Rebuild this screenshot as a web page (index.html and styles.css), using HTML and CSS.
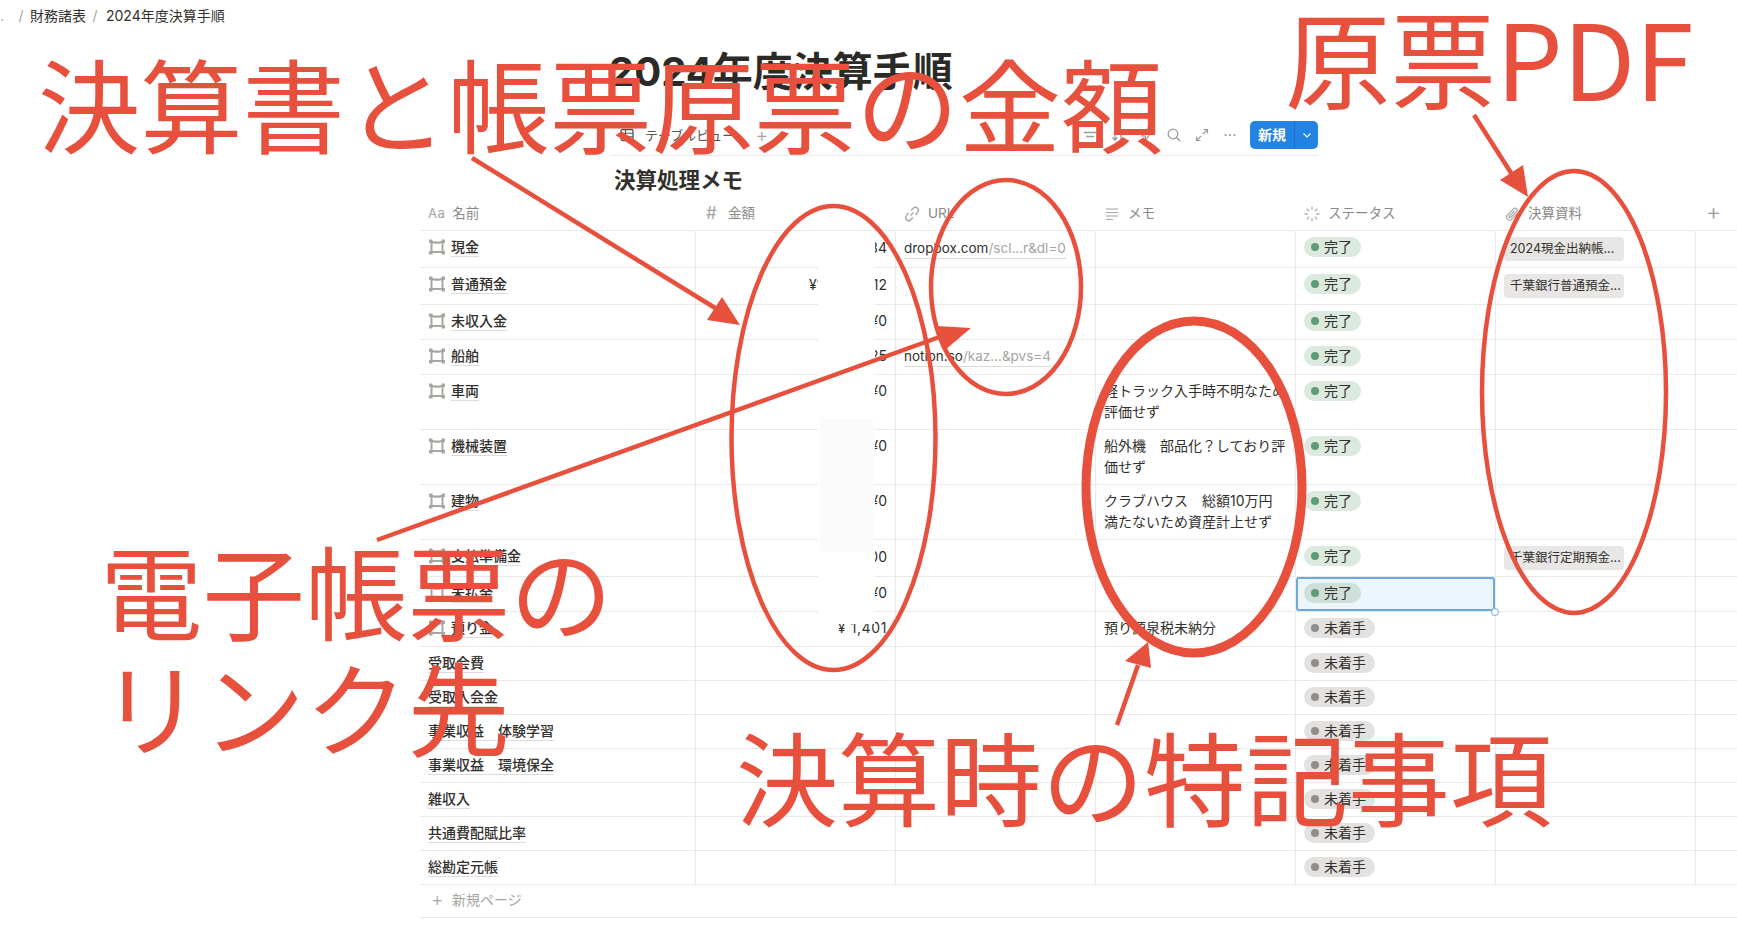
FILE: index.html
```html
<!DOCTYPE html>
<html lang="ja">
<head>
<meta charset="utf-8">
<title>2024年度決算手順</title>
<link rel="stylesheet" href="styles.css">
</head>
<body>
<svg width="0" height="0" class="defs">
  <defs><path id="pgshape" fill="#a8a6a1" fill-rule="evenodd" d="M0 .5H3.500V2Q8 3 12.500 2V.5H16V4H14.500V12H16V15.500H12.500V14H3.500V15.500H0V12H1.500V4H0ZM3.500 4.300V12H12.500V4.300Q8 5.300 3.500 4.300Z"/></defs>
</svg>
<nav class="crumbs">
  <span class="dot">.</span><span class="sep first">/</span><span>財務諸表</span><span class="sep">/</span><span>2024年度決算手順</span>
</nav>
<section class="head">
  <h1 class="title">2024年度決算手順</h1>
  <div class="toolbar">
    <div class="tab">
      <svg class="ic" viewBox="0 0 16 16"><rect x="2" y="2.500" width="12" height="11" rx="1.500" fill="none" stroke="#55534e" stroke-width="1.300"/><path d="M2 6.200H14M2 9.800H14M6.500 2.500V13.500" stroke="#55534e" stroke-width="1.100"/></svg>
      <span class="tab-label">テーブルビュー</span>
      <span class="tab-plus">+</span>
    </div>
    <div class="tools">
      <svg class="ic" viewBox="0 0 16 16"><path d="M2 5.500H14M4 9.500H12" stroke="#9b9a97" stroke-width="1.300" fill="none"/></svg>
      <svg class="ic" viewBox="0 0 16 16"><path d="M5 2.500V13M2.500 10.500 5 13l2.500-2.500M11 13V3M8.500 5.500 11 3l2.500 2.500" stroke="#9b9a97" stroke-width="1.300" fill="none"/></svg>
      <svg class="ic" viewBox="0 0 16 16"><path d="M9 2 4 9h3.500L7 14l5-7H8.500z" stroke="#9b9a97" stroke-width="1.200" fill="none"/></svg>
      <svg class="ic" viewBox="0 0 16 16"><circle cx="7" cy="7" r="4.800" stroke="#9b9a97" stroke-width="1.300" fill="none"/><path d="M10.500 10.500 14 14" stroke="#9b9a97" stroke-width="1.400"/></svg>
      <svg class="ic" viewBox="0 0 16 16"><path d="M9.500 2.500H13.500V6.500M13.500 2.500 9 7M6.500 13.500H2.500V9.500M2.500 13.500 7 9" stroke="#9b9a97" stroke-width="1.200" fill="none"/></svg>
      <svg class="ic" viewBox="0 0 16 16"><circle cx="3.500" cy="8" r="1.100" fill="#9b9a97"/><circle cx="8" cy="8" r="1.100" fill="#9b9a97"/><circle cx="12.500" cy="8" r="1.100" fill="#9b9a97"/></svg>
      <div class="new-btn">
        <span class="new-main">新規</span>
        <span class="new-more"><svg viewBox="0 0 10 10" class="chev"><path d="M1.500 3.500 5 7l3.500-3.500" fill="none" stroke="#fff" stroke-width="1.100"/></svg></span>
      </div>
    </div>
  </div>
  <h2 class="subtitle">決算処理メモ</h2>
</section>

<section class="table">
  <div class="row thead">
    <div class="th"><span class="aa">Aa</span><span>名前</span></div>
    <div class="th"><span class="hash">#</span><span>金額</span></div>
    <div class="th"><svg class="ic" viewBox="0 0 16 16"><path d="M6.500 9.500 9.500 6.500M7 4.500 9.300 2.300a2.800 2.800 0 0 1 4.100 4.100L11.500 9M9 11.500l-2.300 2.200a2.800 2.800 0 0 1-4.100-4.100L4.500 7" fill="none" stroke="#a5a4a0" stroke-width="1.300"/></svg><span>URL</span></div>
    <div class="th"><svg class="ic" viewBox="0 0 16 16"><path d="M2 3H14M2 6.500H14M2 10H14M2 13.500H9" fill="none" stroke="#a5a4a0" stroke-width="1.200"/></svg><span>メモ</span></div>
    <div class="th"><svg class="ic" viewBox="0 0 16 16"><path d="M8 0.500V4M8 12V15.500M0.500 8H4M12 8H15.500M2.700 2.700 5.200 5.200M10.800 10.800 13.300 13.300M13.300 2.700 10.800 5.200M5.200 10.800 2.700 13.300" fill="none" stroke="#b5b4b0" stroke-width="1.300"/></svg><span>ステータス</span></div>
    <div class="th"><svg class="ic" viewBox="0 0 16 16"><path d="M13.500 7.500 7.800 13.200a3 3 0 0 1-4.300-4.300L9.700 2.700a2 2 0 0 1 2.900 2.900L6.600 11.500a1 1 0 0 1-1.400-1.400L10.500 4.800" fill="none" stroke="#a5a4a0" stroke-width="1.200"/></svg><span>決算資料</span></div>
    <div class="th add">+</div>
  </div>

  <div class="row r-37">
    <div class="cell name"><svg class="pg" viewBox="0 0 16 16"><use href="#pgshape"/></svg><span class="link">現金</span></div>
    <div class="cell num">¥123,434</div>
    <div class="cell"><span class="link url">dropbox.com<span class="mute">/scl...r&amp;dl=0</span></span></div>
    <div class="cell"></div>
    <div class="cell tag"><span class="pill done"><i></i>完了</span></div>
    <div class="cell tag"><span class="chip">2024現金出納帳...</span></div>
    <div class="cell"></div>
  </div>
  <div class="row r-37">
    <div class="cell name"><svg class="pg" viewBox="0 0 16 16"><use href="#pgshape"/></svg><span class="link">普通預金</span></div>
    <div class="cell num">¥12,345,612</div>
    <div class="cell"></div>
    <div class="cell"></div>
    <div class="cell tag"><span class="pill done"><i></i>完了</span></div>
    <div class="cell tag"><span class="chip">千葉銀行普通預金...</span></div>
    <div class="cell"></div>
  </div>
  <div class="row r-35">
    <div class="cell name"><svg class="pg" viewBox="0 0 16 16"><use href="#pgshape"/></svg><span class="link">未収入金</span></div>
    <div class="cell num">¥0</div>
    <div class="cell"></div>
    <div class="cell"></div>
    <div class="cell tag"><span class="pill done"><i></i>完了</span></div>
    <div class="cell"></div>
    <div class="cell"></div>
  </div>
  <div class="row r-35">
    <div class="cell name"><svg class="pg" viewBox="0 0 16 16"><use href="#pgshape"/></svg><span class="link">船舶</span></div>
    <div class="cell num">¥100,025</div>
    <div class="cell"><span class="link url">notion.so<span class="mute">/kaz...&amp;pvs=4</span></span></div>
    <div class="cell"></div>
    <div class="cell tag"><span class="pill done"><i></i>完了</span></div>
    <div class="cell"></div>
    <div class="cell"></div>
  </div>
  <div class="row r-55">
    <div class="cell name"><svg class="pg" viewBox="0 0 16 16"><use href="#pgshape"/></svg><span class="link">車両</span></div>
    <div class="cell num">¥0</div>
    <div class="cell"></div>
    <div class="cell">軽トラック入手時不明なため<br>評価せず</div>
    <div class="cell tag"><span class="pill done"><i></i>完了</span></div>
    <div class="cell"></div>
    <div class="cell"></div>
  </div>
  <div class="row r-55">
    <div class="cell name"><svg class="pg" viewBox="0 0 16 16"><use href="#pgshape"/></svg><span class="link">機械装置</span></div>
    <div class="cell num">¥0</div>
    <div class="cell"></div>
    <div class="cell">船外機　部品化？しており評<br>価せず</div>
    <div class="cell tag"><span class="pill done"><i></i>完了</span></div>
    <div class="cell"></div>
    <div class="cell"></div>
  </div>
  <div class="row r-55">
    <div class="cell name"><svg class="pg" viewBox="0 0 16 16"><use href="#pgshape"/></svg><span class="link">建物</span></div>
    <div class="cell num">¥0</div>
    <div class="cell"></div>
    <div class="cell">クラブハウス　総額10万円<br>満たないため資産計上せず</div>
    <div class="cell tag"><span class="pill done"><i></i>完了</span></div>
    <div class="cell"></div>
    <div class="cell"></div>
  </div>
  <div class="row r-37">
    <div class="cell name"><svg class="pg" viewBox="0 0 16 16"><use href="#pgshape"/></svg><span class="link">支払準備金</span></div>
    <div class="cell num">¥100,000</div>
    <div class="cell"></div>
    <div class="cell"></div>
    <div class="cell tag"><span class="pill done"><i></i>完了</span></div>
    <div class="cell tag"><span class="chip">千葉銀行定期預金...</span></div>
    <div class="cell"></div>
  </div>
  <div class="row r-35">
    <div class="cell name"><svg class="pg" viewBox="0 0 16 16"><use href="#pgshape"/></svg><span class="link">未払金</span></div>
    <div class="cell num">¥0</div>
    <div class="cell"></div>
    <div class="cell"></div>
    <div class="cell tag selected"><span class="pill done"><i></i>完了</span><b class="handle"></b></div>
    <div class="cell"></div>
    <div class="cell"></div>
  </div>
  <div class="row r-35">
    <div class="cell name"><svg class="pg" viewBox="0 0 16 16"><use href="#pgshape"/></svg><span class="link">預り金</span></div>
    <div class="cell num wide">¥&nbsp;1,401</div>
    <div class="cell"></div>
    <div class="cell">預り源泉税未納分</div>
    <div class="cell tag"><span class="pill todo"><i></i>未着手</span></div>
    <div class="cell"></div>
    <div class="cell"></div>
  </div>
  <div class="row r-34"><div class="cell name"><span class="link">受取会費</span></div><div class="cell"></div><div class="cell"></div><div class="cell"></div><div class="cell tag"><span class="pill todo"><i></i>未着手</span></div><div class="cell"></div><div class="cell"></div></div>
  <div class="row r-34"><div class="cell name"><span class="link">受取入会金</span></div><div class="cell"></div><div class="cell"></div><div class="cell"></div><div class="cell tag"><span class="pill todo"><i></i>未着手</span></div><div class="cell"></div><div class="cell"></div></div>
  <div class="row r-34"><div class="cell name"><span class="link">事業収益　体験学習</span></div><div class="cell"></div><div class="cell"></div><div class="cell"></div><div class="cell tag"><span class="pill todo"><i></i>未着手</span></div><div class="cell"></div><div class="cell"></div></div>
  <div class="row r-34"><div class="cell name"><span class="link">事業収益　環境保全</span></div><div class="cell"></div><div class="cell"></div><div class="cell"></div><div class="cell tag"><span class="pill todo"><i></i>未着手</span></div><div class="cell"></div><div class="cell"></div></div>
  <div class="row r-34"><div class="cell name"><span class="link">雑収入</span></div><div class="cell"></div><div class="cell"></div><div class="cell"></div><div class="cell tag"><span class="pill todo"><i></i>未着手</span></div><div class="cell"></div><div class="cell"></div></div>
  <div class="row r-34"><div class="cell name"><span class="link">共通費配賦比率</span></div><div class="cell"></div><div class="cell"></div><div class="cell"></div><div class="cell tag"><span class="pill todo"><i></i>未着手</span></div><div class="cell"></div><div class="cell"></div></div>
  <div class="row r-34"><div class="cell name"><span class="link">総勘定元帳</span></div><div class="cell"></div><div class="cell"></div><div class="cell"></div><div class="cell tag"><span class="pill todo"><i></i>未着手</span></div><div class="cell"></div><div class="cell"></div></div>
  <div class="newpage"><span class="np-plus">+</span><span>新規ページ</span></div>
</section>

<div class="patch"></div>
<div class="patch-tint"></div>

<svg class="marks" viewBox="0 0 1737 929" width="1737" height="929">
  <g fill="none" stroke="#e8503e">
    <ellipse cx="833.500" cy="438" rx="102" ry="232" stroke-width="4.500"/>
    <ellipse cx="1006" cy="287" rx="75" ry="107" stroke-width="4.500"/>
    <ellipse cx="1194" cy="487" rx="108" ry="166" stroke-width="9"/>
    <ellipse cx="1574" cy="392" rx="92" ry="221" stroke-width="4.500"/>
    <path d="M472 158 720 311" stroke-width="4.500"/>
    <path d="M377 540 945 335" stroke-width="4.500"/>
    <path d="M1474 115 1513 176" stroke-width="4.500"/>
    <path d="M1117 725 1138 665" stroke-width="4.500"/>
  </g>
  <g fill="#e8503e">
    <polygon points="740,325 722,297 707,320"/>
    <polygon points="971,328 937,326 945,350"/>
    <polygon points="1528,197 1523,165 1500,180"/>
    <polygon points="1148,642 1125,661 1151,668"/>
  </g>
</svg>
<div class="note n1">決算書と帳票原票の金額</div>
<div class="note n2">原票PDF</div>
<div class="note n3">電子帳票の<br>リンク先</div>
<div class="note n4">決算時の特記事項</div>
</body>
</html>
```
FILE: styles.css
```css
* { box-sizing: border-box; }
html, body { margin: 0; padding: 0; }
body {
  width: 1737px;
  height: 929px;
  overflow: hidden;
  position: relative;
  background: #fff;
  color: #32302c;
  font-family: "Inter", "Noto Sans CJK JP", sans-serif;
  font-size: 14px;
  line-height: 21px;
}
.defs { position: absolute; }
.crumbs { height: 30px; display: flex; align-items: center; font-size: 14px; }
.crumbs .dot { width: 12px; color: #a5a4a0; }
.crumbs .sep { color: #a5a4a0; width: 12px; text-align: center; }
.crumbs .sep.first { margin-left: 3px; margin-right: 3px; }
.crumbs .sep:not(.first) { margin: 0 5px 0 3px; }

.head { margin-left: 611px; width: 707px; }
.title { margin: 19px 0 26px -2px; font-size: 40px; line-height: 46px; font-weight: 700; color: #2b2a27; white-space: nowrap; }
.toolbar { height: 35px; display: flex; justify-content: space-between; border-bottom: 1px solid #e9e9e7; }
.tab { display: flex; align-items: center; height: 28px; padding-left: 8px; color: #55534e; font-size: 13px; }
.tab-label { margin-left: 10px; }
.tab-plus { margin-left: 20px; color: #a5a4a0; font-size: 20px; font-weight: 300; }
.ic { width: 16px; height: 16px; flex: none; }
.tools { display: flex; align-items: center; gap: 12px; height: 28px; }
.new-btn { display: flex; height: 28px; background: #2383e2; color: #fff; border-radius: 5px; font-weight: 700; }
.new-main { width: 45px; text-align: center; line-height: 28px; border-right: 1px solid #1c6fc4; }
.new-more { width: 23px; display: flex; align-items: center; justify-content: center; }
.chev { width: 10px; height: 10px; }
.subtitle { margin: 9px 0 0 3px; height: 30px; font-size: 21.500px; line-height: 30px; font-weight: 700; color: #32302c; }

.table { margin-left: 420px; width: 1317px; }
.row { display: grid; grid-template-columns: 275px repeat(5, 200px) 42px; border-bottom: 1px solid #e9e9e7; }
.thead { height: 36px; }
.th { display: flex; align-items: center; padding: 2px 8px 0 9px; gap: 8px; color: #8a8985; font-size: 13.500px; }
.th:first-child { padding-left: 8px; gap: 7px; }
.th .aa { color: #a5a4a0; font-size: 13px; letter-spacing: .5px; }
.th .hash { color: #a5a4a0; font-size: 17px; width: 11px; margin: 0 3px 0 2px; }
.th.add { padding: 0 0 0 11px; font-size: 23px; color: #9b9a97; font-weight: 300; }
.r-37 { height: 37px; }
.r-35 { height: 35px; }
.r-55 { height: 55px; }
.r-34 { height: 34px; }
.cell { border-left: 1px solid #e9e9e7; padding: 5px 8px 0; min-width: 0; }
.r-37 .cell { padding-top: 6px; }
.cell.name { border-left: 0; display: flex; align-items: flex-start; padding: 6px 0 0 8px; gap: 6px; font-weight: 500; }
.pg { width: 16px; height: 16px; flex: none; margin: 2px 0 0 1px; }
.link { display: inline-block; line-height: 19px; border-bottom: 1px solid #dedcd8; white-space: nowrap; }
.url { font-size: 13.500px; }
.mute { color: #a5a4a0; }
.num { text-align: right; }
.wide { letter-spacing: .6px; }
.cell.tag, .r-37 .cell.tag { padding-top: 6px; }
.pill { display: flex; width: fit-content; align-items: center; height: 20px; padding: 0 9px 0 7px; border-radius: 10px; line-height: 20px; color: #32302c; }
.pill i { width: 8px; height: 8px; border-radius: 50%; margin-right: 5px; }
.pill.done { background: #dbe9de; }
.pill.done i { background: #5e9b78; }
.pill.todo { background: #e3e2e0; }
.pill.todo i { background: #8e8d8a; }
.chip { display: block; width: 120px; height: 24px; padding: 0 6px; border-radius: 4px; background: #e8e7e5; font-size: 12.500px; line-height: 23px; white-space: nowrap; overflow: hidden; }
.selected { position: relative; background: #edf5fc; border-left-color: #e9e9e7; box-shadow: inset 0 0 0 2px #6fa8dc; border-radius: 3px; }
.selected .pill.done { background: #cfe0d8; }
.handle { position: absolute; right: -4px; bottom: -5px; width: 8px; height: 8px; border: 1.500px solid #6fa8dc; background: #fff; border-radius: 50%; }
.newpage { height: 33px; display: flex; align-items: center; border-bottom: 1px solid #e9e9e7; color: #a7a6a2; font-size: 14px; padding: 0 0 3px 11px; }
.np-plus { width: 21px; font-size: 19px; font-weight: 300; }

.patch { position: absolute; left: 818px; top: 232px; width: 57px; height: 392px; background: #fff; }
.patch-tint { position: absolute; left: 820px; top: 418px; width: 53px; height: 134px; background: #fbfbfb; }
.marks { position: absolute; left: 0; top: 0; pointer-events: none; }
.note { position: absolute; color: #e8503e; font-family: "Noto Sans CJK JP", "Noto Sans", sans-serif; font-weight: 400; white-space: nowrap; line-height: 1; }
.n1 { left: 38px; top: 50px; font-size: 102.300px; }
.n2 { left: 1285px; top: 3px; font-size: 105.500px; }
.n3 { left: 100px; top: 531px; font-size: 102.500px; line-height: 116px; }
.n4 { left: 736px; top: 724px; font-size: 102px; }
```
